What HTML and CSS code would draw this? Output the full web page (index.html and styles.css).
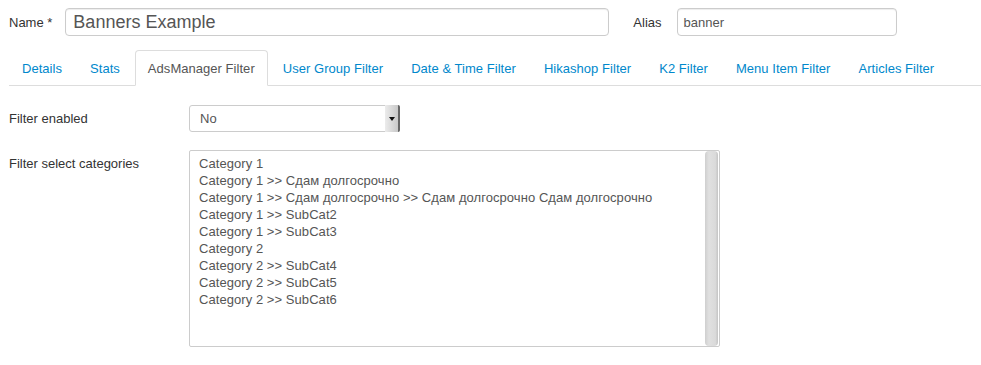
FILE: index.html
```html
<!DOCTYPE html>
<html>
<head>
<meta charset="utf-8">
<link rel="stylesheet" href="styles.css">
</head>
<body>
<div class="page">
  <div class="title-row">
    <label class="title-label">Name *</label>
    <div class="input input-name">Banners Example</div>
    <label class="title-label alias-label">Alias</label>
    <div class="input input-alias">banner</div>
  </div>

  <ul class="tabs">
    <li class="tab"><a>Details</a></li>
    <li class="tab"><a>Stats</a></li>
    <li class="tab active"><a>AdsManager Filter</a></li>
    <li class="tab"><a>User Group Filter</a></li>
    <li class="tab"><a>Date &amp; Time Filter</a></li>
    <li class="tab"><a>Hikashop Filter</a></li>
    <li class="tab"><a>K2 Filter</a></li>
    <li class="tab"><a>Menu Item Filter</a></li>
    <li class="tab"><a>Articles Filter</a></li>
  </ul>

  <div class="form">
    <div class="control-group">
      <div class="control-label">Filter enabled</div>
      <div class="select">
        <span class="select-value">No</span>
        <span class="select-btn"><span class="arrow"></span></span>
      </div>
    </div>
    <div class="control-group">
      <div class="control-label">Filter select categories</div>
      <div class="multi">
        <div class="options">
          <div class="opt">Category 1</div>
          <div class="opt">Category 1 &gt;&gt; Сдам долгосрочно</div>
          <div class="opt">Category 1 &gt;&gt; Сдам долгосрочно &gt;&gt; Сдам долгосрочно Сдам долгосрочно</div>
          <div class="opt">Category 1 &gt;&gt; SubCat2</div>
          <div class="opt">Category 1 &gt;&gt; SubCat3</div>
          <div class="opt">Category 2</div>
          <div class="opt">Category 2 &gt;&gt; SubCat4</div>
          <div class="opt">Category 2 &gt;&gt; SubCat5</div>
          <div class="opt">Category 2 &gt;&gt; SubCat6</div>
        </div>
        <div class="scrollbar"></div>
      </div>
    </div>
  </div>
</div>
</body>
</html>
```
FILE: styles.css
```css
html, body {
  margin: 0;
  padding: 0;
  background: #fff;
}
body {
  font-family: "Liberation Sans", Arial, sans-serif;
  font-size: 13px;
  color: #333;
}
.page {
  padding: 8px 0 0 9px;
}
.title-row {
  display: flex;
  align-items: center;
  height: 28px;
}
.title-label {
  color: #333;
  font-size: 13px;
  margin-right: 13px;
}
.alias-label {
  margin-left: 24px;
  margin-right: 15px;
}
.input {
  box-sizing: border-box;
  height: 28px;
  border: 1px solid #ccc;
  border-radius: 4px;
  box-shadow: inset 0 1px 1px rgba(0,0,0,0.075);
  color: #555;
  display: flex;
  align-items: center;
}
.input-name {
  width: 544px;
  font-size: 18px;
  padding: 0 7px;
}
.input-alias {
  width: 220px;
  font-size: 13px;
  padding: 0 6px;
}
.tabs {
  list-style: none;
  margin: 14px 0 0 0;
  padding: 0;
  display: flex;
  border-bottom: 1px solid #ddd;
}
.tab {
  margin-right: 2px;
  margin-bottom: -1px;
}
.tab a {
  display: block;
  box-sizing: border-box;
  height: 36px;
  line-height: 35px;
  padding: 0 12px;
  border: 1px solid transparent;
  border-radius: 4px 4px 0 0;
  color: #0088cc;
  white-space: nowrap;
  letter-spacing: 0.04px;
}
.tab.active a {
  color: #555;
  border-color: #ddd #ddd #fff #ddd;
  background: #fff;
}
.form {
  padding-top: 19px;
}
.control-group {
  display: flex;
  align-items: flex-start;
  margin-bottom: 18px;
}
.control-label {
  width: 180px;
  padding-top: 6px;
  color: #333;
}
.select {
  box-sizing: border-box;
  width: 211px;
  height: 27px;
  border: 1px solid #ccc;
  border-radius: 3px;
  display: flex;
  align-items: stretch;
  color: #555;
}
.select-value {
  flex: 1;
  padding-left: 10px;
  line-height: 25px;
}
.select-btn {
  width: 13px;
  background: linear-gradient(to right, #ececec, #c8c8c8);
  border-right: 2px solid #666;
  border-radius: 0 2px 2px 0;
  display: flex;
  align-items: center;
  justify-content: center;
  margin: -1px -1px -1px 0;
}
.arrow {
  width: 0;
  height: 0;
  border-left: 3px solid transparent;
  border-right: 3px solid transparent;
  border-top: 4px solid #111;
}
.multi {
  box-sizing: border-box;
  width: 531px;
  height: 197px;
  border: 1px solid #ccc;
  border-radius: 2px;
  display: flex;
  color: #555;
}
.options {
  flex: 1;
  padding: 4px 0 0 9px;
}
.opt {
  line-height: 17px;
  white-space: nowrap;
  letter-spacing: 0.06px;
}
.scrollbar {
  width: 13px;
  margin-right: 1px;
  background: linear-gradient(to right, #cfcfcf, #e0e0e0 30%, #dadada 80%, #c4c4c4);
  border-radius: 4px;
}
```
